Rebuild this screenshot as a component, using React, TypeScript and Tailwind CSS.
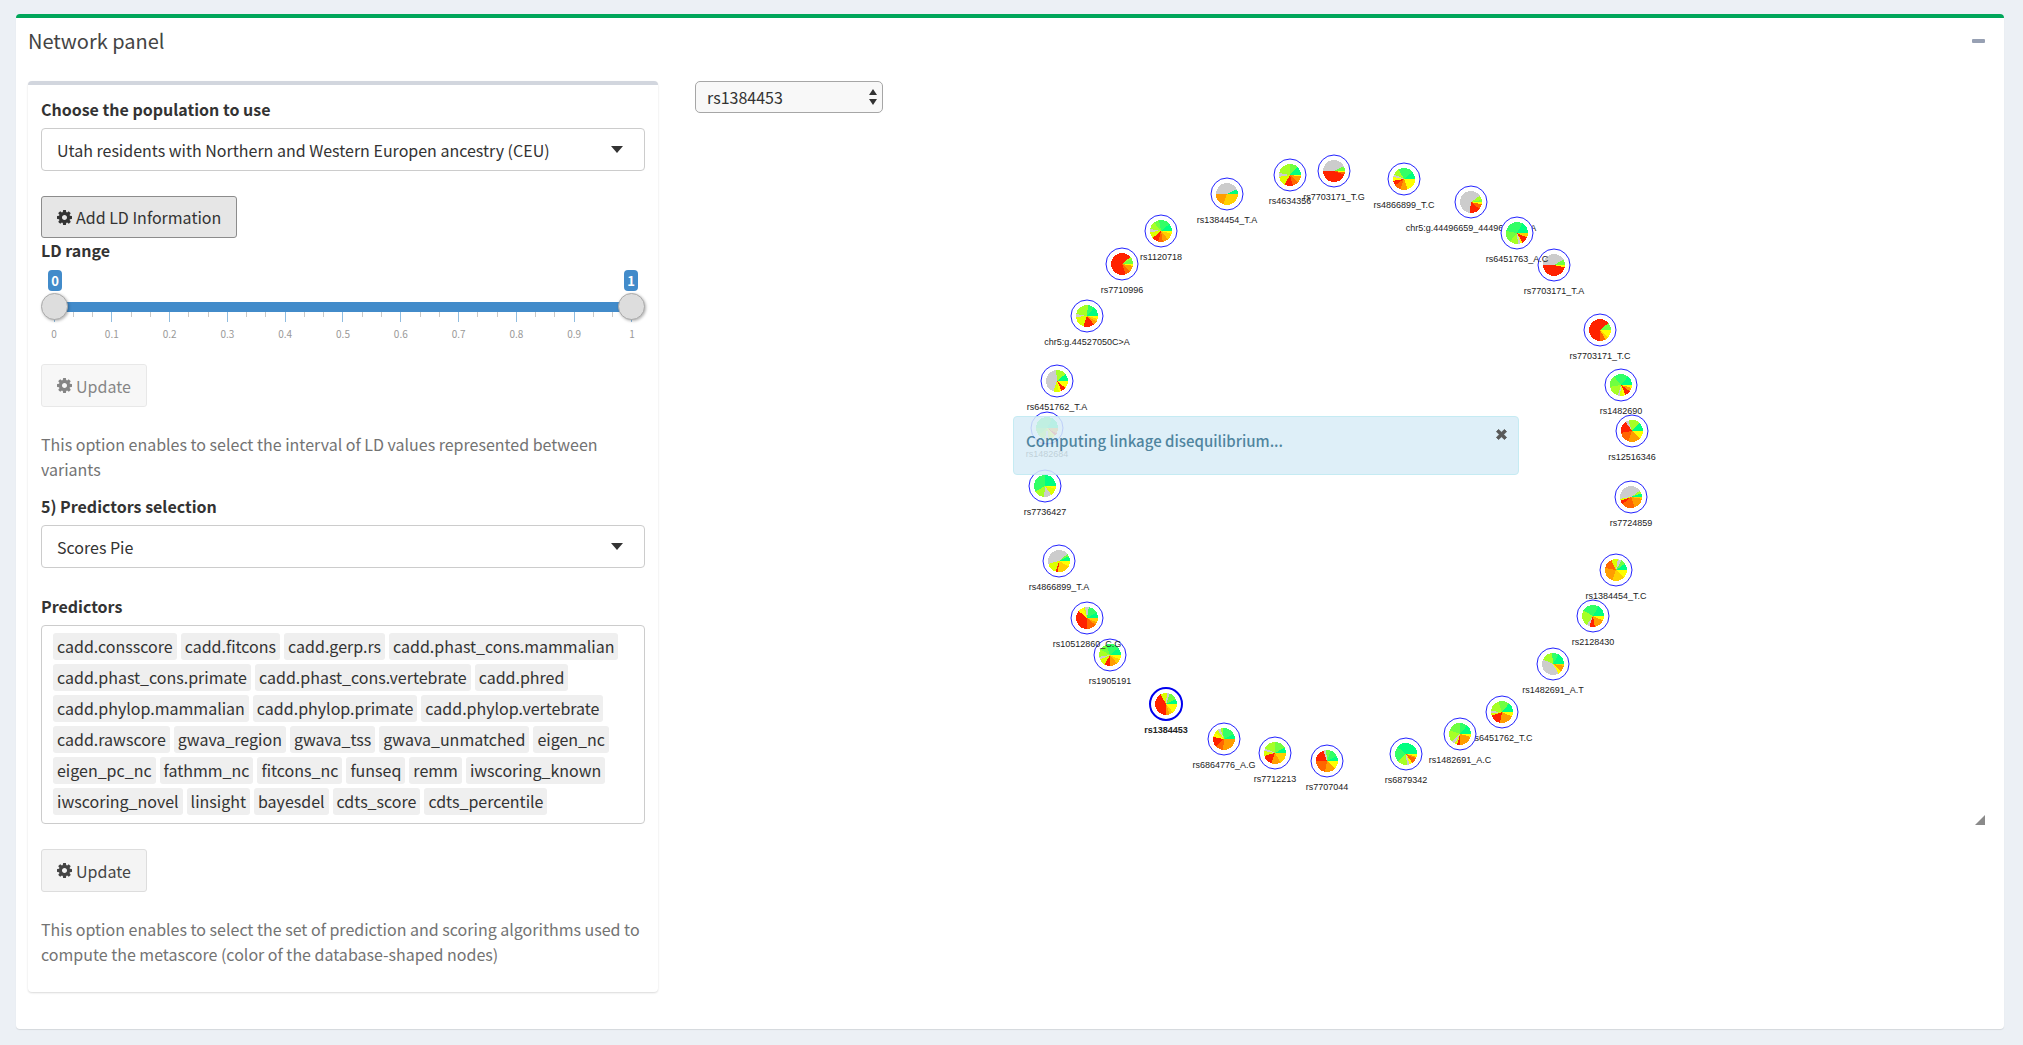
import { useState } from "react";
import type { ReactNode } from "react";

type Slice = [end: number, color: string];

const palette: Record<string, string> = {
  y: "#ffff00",
  g: "#ffd000",
  o: "#ff9d00",
  O: "#ff6600",
  r: "#ff2200",
  l: "#dcff00",
  L: "#a6ff26",
  n: "#70ff40",
  G: "#33ff66",
  s: "#00ff80",
  x: "#cccccc",
};

interface VariantNode {
  id: string;
  x: number;
  y: number;
  pie: string;
}

// Pie slices run clockwise from the right; each entry is a colour key and an end angle.
const nodes: VariantNode[] = [
  { id: "rs4634356", x: 595, y: 62, pie: "y8 o45 O75 r120 l170 x190 L270 n315 s360" },
  { id: "rs7703171_T.G", x: 639, y: 58, pie: "y8 O20 r180 x335 n360" },
  { id: "rs1384454_T.A", x: 532, y: 81, pie: "g110 o180 x335 s360" },
  { id: "rs1120718", x: 466, y: 118, pie: "y15 g50 o80 O105 r140 l175 x190 L230 n260 G320 s360" },
  { id: "rs7710996", x: 427, y: 151, pie: "y10 o45 O70 r320 L330 n360" },
  { id: "chr5:g.44527050C>A", x: 392, y: 203, pie: "y15 g30 o50 r110 l175 x190 L275 G310 s360" },
  { id: "rs6451762_T.A", x: 362, y: 268, pie: "y40 r65 y80 l110 x265 L320 s360" },
  { id: "rs1482684", x: 352, y: 315, pie: "o30 r45 y60 l80 x100 L140 n180 G300 s360" },
  { id: "rs7736427", x: 350, y: 373, pie: "y15 l55 x95 L150 G270 s360" },
  { id: "rs4866899_T.A", x: 364, y: 448, pie: "y30 g95 r108 l165 x320 n335 s360" },
  { id: "rs1905191", x: 415, y: 542, pie: "y25 g50 o90 r120 l155 x170 L210 n250 G320 s360" },
  { id: "rs10512860_C.G", x: 392, y: 505, pie: "g25 o40 O90 r220 y250 l260 x280 G330 s360" },
  { id: "rs1384453", x: 471, y: 591, pie: "y50 g70 o90 r240 l275 x290 n335 s360" },
  { id: "rs6864776_A.G", x: 529, y: 626, pie: "o95 O135 r190 y215 l235 x250 L262 G335 s360" },
  { id: "rs7712213", x: 580, y: 640, pie: "g60 o110 r165 l190 x205 L270 n330 s360" },
  { id: "rs7707044", x: 632, y: 648, pie: "y45 o100 O180 r250 x265 n290 G335 s360" },
  { id: "rs6879342", x: 711, y: 641, pie: "y15 o25 O55 y70 x85 L135 G220 s360" },
  { id: "rs6451762_T.C", x: 807, y: 599, pie: "y25 o100 r160 l172 x185 L250 n310 s360" },
  { id: "rs1482691_A.C", x: 765, y: 621, pie: "y15 o90 r105 l118 x135 L200 n270 G310 s360" },
  { id: "rs1482691_A.T", x: 858, y: 551, pie: "g10 o45 y60 x205 L265 G300 s360" },
  { id: "rs2128430", x: 898, y: 503, pie: "y25 o80 r110 x125 L210 G300 s360" },
  { id: "rs1384454_T.C", x: 921, y: 457, pie: "y45 g110 o190 O245 l280 x300 n325 s360" },
  { id: "rs7724859", x: 936, y: 384, pie: "g10 o70 O140 r160 l170 x325 L340 s360" },
  { id: "rs12516346", x: 937, y: 318, pie: "y45 o110 O170 r235 x250 L315 s360" },
  { id: "rs1482690", x: 926, y: 272, pie: "y15 o35 r65 y80 l95 x108 L170 n230 G310 s360" },
  { id: "rs7703171_T.C", x: 905, y: 217, pie: "y45 g60 O90 r320 n360" },
  { id: "rs7703171_T.A", x: 859, y: 152, pie: "y12 r180 x330 n360" },
  { id: "chr5:g.44496659_44496660delA", x: 776, y: 89, pie: "y12 O40 r97 x325 L350 n360" },
  { id: "rs6451763_A.C", x: 822, y: 120, pie: "g25 r60 y70 x85 L130 n190 G300 s360" },
  { id: "rs4866899_T.C", x: 709, y: 66, pie: "y70 o110 O145 r170 y190 x205 L240 G320 s360" },
];

const predictors = [
  "cadd.consscore", "cadd.fitcons", "cadd.gerp.rs", "cadd.phast_cons.mammalian",
  "cadd.phast_cons.primate", "cadd.phast_cons.vertebrate", "cadd.phred",
  "cadd.phylop.mammalian", "cadd.phylop.primate", "cadd.phylop.vertebrate",
  "cadd.rawscore", "gwava_region", "gwava_tss", "gwava_unmatched", "eigen_nc",
  "eigen_pc_nc", "fathmm_nc", "fitcons_nc", "funseq", "remm", "iwscoring_known",
  "iwscoring_novel", "linsight", "bayesdel", "cdts_score", "cdts_percentile",
];

const ticks = ["0", "0.1", "0.2", "0.3", "0.4", "0.5", "0.6", "0.7", "0.8", "0.9", "1"];

function Gear() {
  return (
    <svg viewBox="0 128 1536 1536" className="size-[15px] shrink-0" fill="currentColor" aria-hidden="true">
      <path d="M1024 896q0-106-75-181t-181-75-181 75-75 181 75 181 181 75 181-75 75-181zm512-109v222q0 12-8 23t-20 13l-185 28q-19 54-39 91 35 50 107 138 10 12 10 25t-9 23q-27 37-99 108t-94 71q-12 0-26-9l-138-108q-44 23-91 38-16 136-29 186-7 28-36 28h-222q-14 0-24.5-8.5t-11.5-21.5l-28-184q-49-16-90-37l-141 107q-10 9-25 9-14 0-25-11-126-114-165-168-7-10-7-23 0-12 8-23 15-21 51-66.5t54-70.5q-27-50-41-99l-183-27q-13-2-21-12.5t-8-23.5v-222q0-12 8-23t19-13l186-28q14-46 39-92-40-57-107-138-10-12-10-24 0-10 9-23 26-36 98.5-107.5t94.5-71.5q13 0 26 10l138 107q44-23 91-38 16-136 29-186 7-28 36-28h222q14 0 24.5 8.5t11.5 21.5l28 184q49 16 90 37l142-107q9-9 24-9 13 0 25 10 129 119 165 170 7 8 7 22 0 12-8 23-15 21-51 66.5t-54 70.5q26 50 41 98l183 28q13 2 21 12.5t8 23.5z" />
    </svg>
  );
}

function SelectField({ id, label, options }: { id: string; label: string; options: string[] }) {
  return (
    <div className="flex flex-col gap-[7px]">
      <label htmlFor={id} className="leading-6 font-bold">{label}</label>
      <div className="relative">
        <select id={id} className="h-[43px] w-full appearance-none rounded border border-[#cccccc] bg-white px-[15px]">
          {options.map((o) => <option key={o}>{o}</option>)}
        </select>
        <svg viewBox="0 0 12 7" className="pointer-events-none absolute top-[18px] right-[22px] h-[7px] w-3" fill="#333333" aria-hidden="true">
          <path d="M0 0h12L6 7z" />
        </svg>
      </div>
    </div>
  );
}

function UpdateButton({ disabled = false }: { disabled?: boolean }) {
  return (
    <button type="button" disabled={disabled} className="flex h-[43px] items-center gap-1 self-start rounded-[3px] border border-[#dddddd] bg-[#f4f4f4] px-[15px] text-[#444444] disabled:opacity-65">
      <Gear />
      Update
    </button>
  );
}

function HelpText({ children }: { children: ReactNode }) {
  return <p className="leading-[25px] text-[#737373]">{children}</p>;
}

const rangeClass =
  "pointer-events-none absolute inset-x-0 top-0 h-[27px] w-full appearance-none bg-transparent [&::-webkit-slider-thumb]:pointer-events-auto [&::-webkit-slider-thumb]:size-[27px] [&::-webkit-slider-thumb]:appearance-none [&::-webkit-slider-thumb]:rounded-full [&::-webkit-slider-thumb]:border [&::-webkit-slider-thumb]:border-[#aaaaaa] [&::-webkit-slider-thumb]:bg-[#dddddd] [&::-webkit-slider-thumb]:shadow-[1px_1px_3px_rgba(0,0,0,0.3)]";

function RangeSlider() {
  const [low, setLow] = useState(0);
  const [high, setHigh] = useState(1);
  return (
    <fieldset className="flex flex-col">
      <legend className="leading-6 font-bold">LD range</legend>
      <div className="mx-[7px] mt-2 flex justify-between text-[13px] font-bold text-white">
        <output className="h-[21px] w-[14px] rounded bg-[#428bca] text-center leading-[21px]">{low}</output>
        <output className="h-[21px] w-[14px] rounded bg-[#428bca] text-center leading-[21px]">{high}</output>
      </div>
      <div className="relative mt-0.5 h-[27px]">
        <div className="mx-[13px] h-full pt-[9px]">
          <div className="h-2.5 bg-[#428bca]" />
          <div className="flex h-2.5 justify-between">
            {Array.from({ length: 31 }, (_, i) => (
              <span key={i} className="flex w-0 justify-center">
                <span className={i % 3 === 0 ? "h-2.5 w-px shrink-0 bg-[#8fbce0]" : "h-[5px] w-px shrink-0 bg-[#c8c8c8]"} />
              </span>
            ))}
          </div>
        </div>
        <input type="range" aria-label="Minimum LD" min={0} max={1} step={0.1} value={low} onChange={(e) => setLow(Math.min(Number(e.target.value), high))} className={rangeClass} />
        <input type="range" aria-label="Maximum LD" min={0} max={1} step={0.1} value={high} onChange={(e) => setHigh(Math.max(Number(e.target.value), low))} className={rangeClass} />
      </div>
      <div className="mx-[13px] mt-1.5 flex h-4 justify-between text-[10px] leading-4 text-[#999999]">
        {ticks.map((t) => (
          <span key={t} className="flex w-0 justify-center"><span>{t}</span></span>
        ))}
      </div>
    </fieldset>
  );
}

function parsePie(pie: string): Slice[] {
  return pie.split(" ").map((s) => [Number(s.slice(1)), palette[s[0]]]);
}

function point(angle: number, r: number) {
  const a = (angle * Math.PI) / 180;
  return `${(Math.cos(a) * r).toFixed(2)} ${(Math.sin(a) * r).toFixed(2)}`;
}

function PieNode({ node, selected }: { node: VariantNode; selected: boolean }) {
  const slices = parsePie(node.pie);
  return (
    <g transform={`translate(${node.x} ${node.y})`}>
      <circle r="16" fill="#ffffff" stroke={selected ? "#0000ee" : "#2222ff"} strokeWidth={selected ? 2 : 1} />
      <g shapeRendering="crispEdges">
        {slices.map(([end, color], i) => {
          const start = i === 0 ? 0 : slices[i - 1][0];
          return (
            <path key={end} fill={color} d={`M0 0L${point(start, 11)}A11 11 0 ${end - start > 180 ? 1 : 0} 1 ${point(end, 11)}Z`} />
          );
        })}
      </g>
      <text y="29" textAnchor="middle" fill="#222222" fontWeight={selected ? 700 : 400}>{node.id}</text>
    </g>
  );
}

function Network({ selected }: { selected: string }) {
  const [notice, setNotice] = useState(true);
  return (
    <div className="relative">
      <svg viewBox="0 0 1290 712" className="block w-full font-['Liberation_Sans',Arial,sans-serif] text-[9px]" role="img" aria-label="Variant network">
        {nodes.map((n) => <PieNode key={n.id} node={n} selected={n.id === selected} />)}
      </svg>
      <svg viewBox="0 0 10 10" className="absolute right-0 bottom-0 size-2.5" fill="#8a8a8a" aria-hidden="true">
        <path d="M10 0v10H0z" />
      </svg>
      {notice && (
        <div role="status" className="absolute top-[303px] left-[318px] flex h-[59px] w-[506px] items-start justify-between rounded border border-[#bce8f1] bg-[#d9edf7] pt-3 pr-[11px] pl-3 opacity-85">
          <span className="text-[15px] leading-6 font-medium text-[#31708f]">Computing linkage disequilibrium...</span>
          <button type="button" aria-label="Close" onClick={() => setNotice(false)} className="text-[#3d3d3d]">
            <svg viewBox="0 0 11 11" className="size-[11px]" fill="currentColor" aria-hidden="true">
              <path d="M2.6 0.4 5.5 3.3 8.4 0.4 10.6 2.6 7.7 5.5 10.6 8.4 8.4 10.6 5.5 7.7 2.6 10.6 0.4 8.4 3.3 5.5 0.4 2.6z" stroke="currentColor" strokeWidth="0.8" strokeLinejoin="round" />
            </svg>
          </button>
        </div>
      )}
    </div>
  );
}

export default function App() {
  const [selected, setSelected] = useState("rs1384453");
  return (
    <main className="min-h-screen bg-[#ecf0f5] pt-3.5 pr-[19px] pb-4 pl-4 font-['Noto_Sans_CJK_SC','Source_Sans_Pro',sans-serif] text-[16px] text-[#333333]">
      <section className="rounded border-t-4 border-[#00a65a] bg-white pb-[37px] shadow-[0_1px_1px_rgba(0,0,0,0.1)]">
        <header className="flex h-[63px] items-start justify-between pt-2.5 pr-[19px] pl-3">
          <h1 className="text-[20px] leading-[26px] text-[#444444]">Network panel</h1>
          <button type="button" aria-label="Collapse" className="flex h-[26px] items-center text-[#97a0b3]">
            <span className="h-1 w-[13px] rounded-[1px] bg-current" />
          </button>
        </header>
        <div className="flex items-start gap-[37px] pr-[19px] pl-3">
          <form className="flex w-[630px] shrink-0 flex-col rounded border-t-4 border-[#d2d6de] bg-white px-[13px] pt-3 pb-[25px] shadow-[0_1px_2px_rgba(0,0,0,0.15)]" onSubmit={(e) => e.preventDefault()}>
            <SelectField id="population" label="Choose the population to use" options={["Utah residents with Northern and Western Europen ancestry (CEU)"]} />
            <button type="button" className="mt-[25px] flex h-[42px] items-center gap-1 self-start rounded-[3px] border border-[#8c8c8c] bg-[#e6e6e6] px-[15px]">
              <Gear />
              Add LD Information
            </button>
            <RangeSlider />
            <div className="mt-[22px] flex flex-col gap-[25px]">
              <UpdateButton disabled />
              <HelpText>This option enables to select the interval of LD values represented between variants</HelpText>
            </div>
            <div className="mt-3 flex flex-col gap-[26px]">
              <SelectField id="view" label="5) Predictors selection" options={["Scores Pie"]} />
              <div className="flex flex-col gap-[7px]">
                <span id="predictors-label" className="leading-6 font-bold">Predictors</span>
                <ul aria-labelledby="predictors-label" className="flex min-h-[199px] flex-wrap content-start gap-1 rounded border border-[#cccccc] px-[11px] py-[7px]">
                  {predictors.map((p) => (
                    <li key={p} className="h-[27px] rounded-[3px] bg-[#efefef] px-1 leading-[27px]">{p}</li>
                  ))}
                </ul>
              </div>
            </div>
            <div className="mt-[25px] flex flex-col gap-[25px]">
              <UpdateButton />
              <HelpText>This option enables to select the set of prediction and scoring algorithms used to compute the metascore (color of the database-shaped nodes)</HelpText>
            </div>
          </form>
          <div className="min-w-0 grow">
            <div className="relative w-[188px]">
              <select aria-label="Selected variant" value={selected} onChange={(e) => setSelected(e.target.value)} className="block h-8 w-full appearance-none rounded-[5px] border border-[#a6a6a6] bg-[#f8f8f8] px-[11px]">
                {nodes.map((n) => <option key={n.id}>{n.id}</option>)}
              </select>
              <svg viewBox="0 0 8 16" className="pointer-events-none absolute top-2 right-1.5 h-4 w-2" fill="#333333" aria-hidden="true">
                <path d="M4 0l4 6H0zM4 16l4-6H0z" />
              </svg>
            </div>
            <Network selected={selected} />
          </div>
        </div>
      </section>
    </main>
  );
}
